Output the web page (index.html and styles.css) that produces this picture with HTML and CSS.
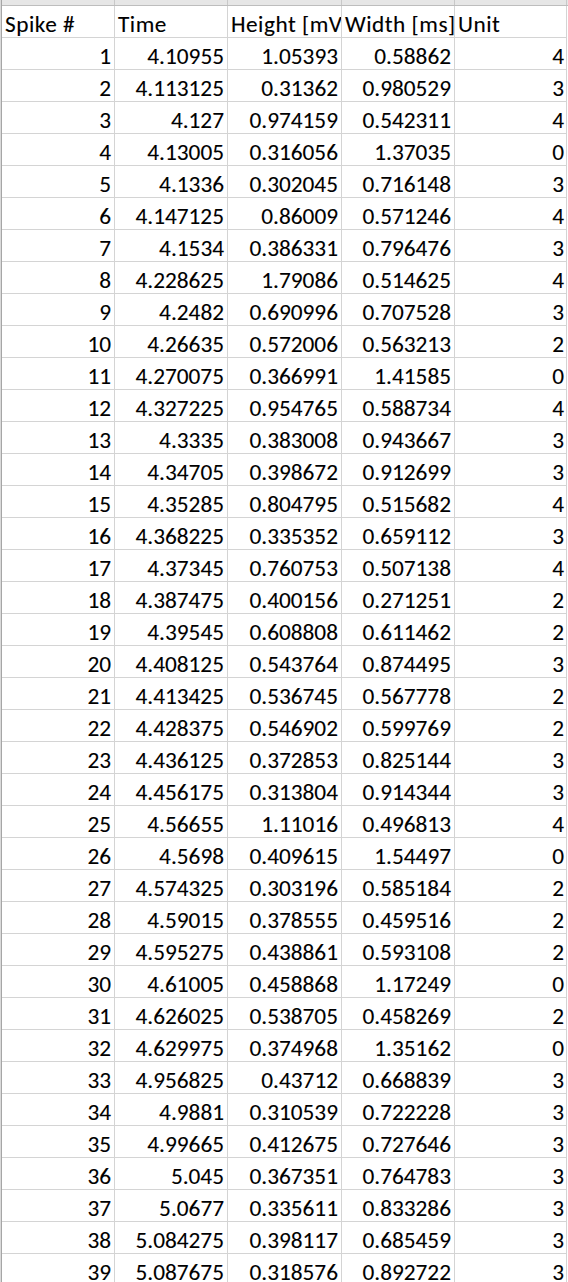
FILE: index.html
```html
<!DOCTYPE html>
<html lang="en">
<head>
<meta charset="utf-8">
<title>Spikes</title>
<link rel="stylesheet" href="styles.css">
</head>
<body>
<div class="frame">
  <div class="sheet">
    <div class="strip"><span></span><span></span><span></span><span></span><span></span></div>
    <div class="row head"><div class="c">Spike #</div><div class="c">Time</div><div class="c">Height [mV]</div><div class="c">Width [ms]</div><div class="c">Unit</div></div>
    <div class="row"><div class="c n">1</div><div class="c n">4.10955</div><div class="c n">1.05393</div><div class="c n">0.58862</div><div class="c n">4</div></div>
    <div class="row"><div class="c n">2</div><div class="c n">4.113125</div><div class="c n">0.31362</div><div class="c n">0.980529</div><div class="c n">3</div></div>
    <div class="row"><div class="c n">3</div><div class="c n">4.127</div><div class="c n">0.974159</div><div class="c n">0.542311</div><div class="c n">4</div></div>
    <div class="row"><div class="c n">4</div><div class="c n">4.13005</div><div class="c n">0.316056</div><div class="c n">1.37035</div><div class="c n">0</div></div>
    <div class="row"><div class="c n">5</div><div class="c n">4.1336</div><div class="c n">0.302045</div><div class="c n">0.716148</div><div class="c n">3</div></div>
    <div class="row"><div class="c n">6</div><div class="c n">4.147125</div><div class="c n">0.86009</div><div class="c n">0.571246</div><div class="c n">4</div></div>
    <div class="row"><div class="c n">7</div><div class="c n">4.1534</div><div class="c n">0.386331</div><div class="c n">0.796476</div><div class="c n">3</div></div>
    <div class="row"><div class="c n">8</div><div class="c n">4.228625</div><div class="c n">1.79086</div><div class="c n">0.514625</div><div class="c n">4</div></div>
    <div class="row"><div class="c n">9</div><div class="c n">4.2482</div><div class="c n">0.690996</div><div class="c n">0.707528</div><div class="c n">3</div></div>
    <div class="row"><div class="c n">10</div><div class="c n">4.26635</div><div class="c n">0.572006</div><div class="c n">0.563213</div><div class="c n">2</div></div>
    <div class="row"><div class="c n">11</div><div class="c n">4.270075</div><div class="c n">0.366991</div><div class="c n">1.41585</div><div class="c n">0</div></div>
    <div class="row"><div class="c n">12</div><div class="c n">4.327225</div><div class="c n">0.954765</div><div class="c n">0.588734</div><div class="c n">4</div></div>
    <div class="row"><div class="c n">13</div><div class="c n">4.3335</div><div class="c n">0.383008</div><div class="c n">0.943667</div><div class="c n">3</div></div>
    <div class="row"><div class="c n">14</div><div class="c n">4.34705</div><div class="c n">0.398672</div><div class="c n">0.912699</div><div class="c n">3</div></div>
    <div class="row"><div class="c n">15</div><div class="c n">4.35285</div><div class="c n">0.804795</div><div class="c n">0.515682</div><div class="c n">4</div></div>
    <div class="row"><div class="c n">16</div><div class="c n">4.368225</div><div class="c n">0.335352</div><div class="c n">0.659112</div><div class="c n">3</div></div>
    <div class="row"><div class="c n">17</div><div class="c n">4.37345</div><div class="c n">0.760753</div><div class="c n">0.507138</div><div class="c n">4</div></div>
    <div class="row"><div class="c n">18</div><div class="c n">4.387475</div><div class="c n">0.400156</div><div class="c n">0.271251</div><div class="c n">2</div></div>
    <div class="row"><div class="c n">19</div><div class="c n">4.39545</div><div class="c n">0.608808</div><div class="c n">0.611462</div><div class="c n">2</div></div>
    <div class="row"><div class="c n">20</div><div class="c n">4.408125</div><div class="c n">0.543764</div><div class="c n">0.874495</div><div class="c n">3</div></div>
    <div class="row"><div class="c n">21</div><div class="c n">4.413425</div><div class="c n">0.536745</div><div class="c n">0.567778</div><div class="c n">2</div></div>
    <div class="row"><div class="c n">22</div><div class="c n">4.428375</div><div class="c n">0.546902</div><div class="c n">0.599769</div><div class="c n">2</div></div>
    <div class="row"><div class="c n">23</div><div class="c n">4.436125</div><div class="c n">0.372853</div><div class="c n">0.825144</div><div class="c n">3</div></div>
    <div class="row"><div class="c n">24</div><div class="c n">4.456175</div><div class="c n">0.313804</div><div class="c n">0.914344</div><div class="c n">3</div></div>
    <div class="row"><div class="c n">25</div><div class="c n">4.56655</div><div class="c n">1.11016</div><div class="c n">0.496813</div><div class="c n">4</div></div>
    <div class="row"><div class="c n">26</div><div class="c n">4.5698</div><div class="c n">0.409615</div><div class="c n">1.54497</div><div class="c n">0</div></div>
    <div class="row"><div class="c n">27</div><div class="c n">4.574325</div><div class="c n">0.303196</div><div class="c n">0.585184</div><div class="c n">2</div></div>
    <div class="row"><div class="c n">28</div><div class="c n">4.59015</div><div class="c n">0.378555</div><div class="c n">0.459516</div><div class="c n">2</div></div>
    <div class="row"><div class="c n">29</div><div class="c n">4.595275</div><div class="c n">0.438861</div><div class="c n">0.593108</div><div class="c n">2</div></div>
    <div class="row"><div class="c n">30</div><div class="c n">4.61005</div><div class="c n">0.458868</div><div class="c n">1.17249</div><div class="c n">0</div></div>
    <div class="row"><div class="c n">31</div><div class="c n">4.626025</div><div class="c n">0.538705</div><div class="c n">0.458269</div><div class="c n">2</div></div>
    <div class="row"><div class="c n">32</div><div class="c n">4.629975</div><div class="c n">0.374968</div><div class="c n">1.35162</div><div class="c n">0</div></div>
    <div class="row"><div class="c n">33</div><div class="c n">4.956825</div><div class="c n">0.43712</div><div class="c n">0.668839</div><div class="c n">3</div></div>
    <div class="row"><div class="c n">34</div><div class="c n">4.9881</div><div class="c n">0.310539</div><div class="c n">0.722228</div><div class="c n">3</div></div>
    <div class="row"><div class="c n">35</div><div class="c n">4.99665</div><div class="c n">0.412675</div><div class="c n">0.727646</div><div class="c n">3</div></div>
    <div class="row"><div class="c n">36</div><div class="c n">5.045</div><div class="c n">0.367351</div><div class="c n">0.764783</div><div class="c n">3</div></div>
    <div class="row"><div class="c n">37</div><div class="c n">5.0677</div><div class="c n">0.335611</div><div class="c n">0.833286</div><div class="c n">3</div></div>
    <div class="row"><div class="c n">38</div><div class="c n">5.084275</div><div class="c n">0.398117</div><div class="c n">0.685459</div><div class="c n">3</div></div>
    <div class="row"><div class="c n">39</div><div class="c n">5.087675</div><div class="c n">0.318576</div><div class="c n">0.892722</div><div class="c n">3</div></div>
  </div>
</div>
</body>
</html>
```

FILE: styles.css
```css
html, body {
  margin: 0;
  padding: 0;
  background: #ffffff;
  overflow: hidden;
}

.frame {
  height: 1282px;
  overflow: hidden;
  border-left: 1px solid #dadada;
}

.sheet {
  border-left: 1px solid #a6a6a6;
  font-family: Carlito, "Liberation Sans", Arial, sans-serif;
  font-size: 23.3px;
  color: #000000;
  -webkit-text-stroke: 0.1px #000000;
}

.strip,
.row {
  display: grid;
  grid-template-columns: 113px 113px 114px 113px 112px;
}

.strip {
  height: 6px;
  box-sizing: border-box;
  background: #e6e6e6;
  border-bottom: 1px solid #bdbdbd;
}

.strip span {
  border-right: 1px solid #c8c8c8;
}

.c {
  box-sizing: border-box;
  height: 32px;
  padding: 5px 3px 0 3px;
  line-height: 26px;
  border-right: 1px solid #d4d4d4;
  border-bottom: 1px solid #d4d4d4;
  white-space: nowrap;
  overflow: hidden;
}

.head .c {
  letter-spacing: 0.5px;
}

.n {
  text-align: right;
  padding-right: 3px;
}

.row .c:last-child.n {
  padding-right: 2px;
}
```
